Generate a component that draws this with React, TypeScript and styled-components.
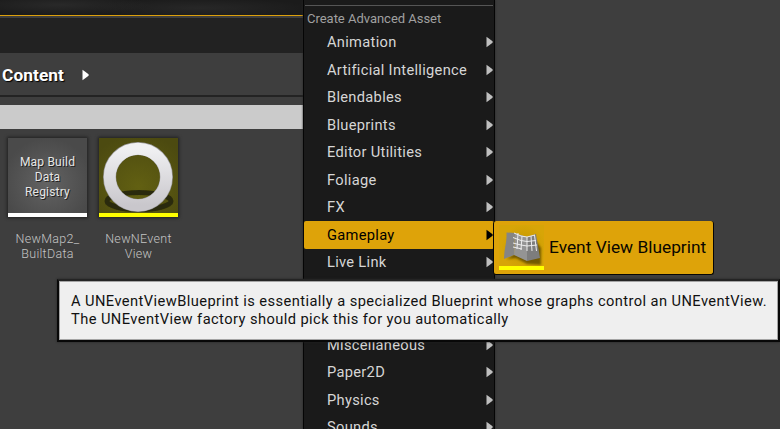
import React from 'react';
import styled, { createGlobalStyle } from 'styled-components';

const GlobalStyle = createGlobalStyle`
  body { margin: 0; background: #3e3e3e; overflow: hidden; }
  * { box-sizing: border-box; }
`;

const Window = styled.div`
  position: relative;
  display: flex;
  width: 780px;
  height: 429px;
  overflow: hidden;
  background: #3e3e3e;
  font-family: Roboto, 'Liberation Sans', sans-serif;
  white-space: nowrap;
`;

const Browser = styled.section`
  display: flex;
  flex-direction: column;
  flex: 0 0 303px;
`;

const Viewport = styled.div`
  height: 15px;
  background:
    radial-gradient(ellipse 90px 10px at 60px 5px, #292929, transparent),
    radial-gradient(ellipse 110px 10px at 200px 8px, #272727, transparent),
    #1b1b1b;
`;

const TabStrip = styled.div`
  height: 38px;
  background: #222;
  border-top: 1px solid #dca00c;
  box-shadow: inset 0 2px #3e3e3e;
`;

const Breadcrumb = styled.nav`
  display: flex;
  align-items: center;
  gap: 18px;
  height: 44px;
  padding: 1px 0 0 2px;
  color: #fff;
  border-bottom: 2px solid #232323;
  font-size: 17.33px;
  font-weight: 700;
  letter-spacing: 0.05px;
  text-shadow: 1px 1px 1px #000;
`;

const SearchStrip = styled.div`
  height: 24px;
  margin-top: 8px;
  background: #cbcbcb;
`;

const AssetGrid = styled.div`
  display: flex;
  gap: 12px;
  padding: 9px 0 0 8px;
`;

const AssetTile = styled.figure`
  width: 79px;
  margin: 0;
`;

const Thumbnail = styled.div<{ $accent: string }>`
  display: flex;
  align-items: center;
  justify-content: center;
  width: 79px;
  height: 79px;
  border-bottom: 4px solid ${(p) => p.$accent};
  background: radial-gradient(circle at 50% 60%, #636363, #4a4a4a 75%);
  box-shadow: 0 0 3px 1px #202020;
  color: #e6e6e6;
  font-size: 12px;
  line-height: 15px;
  letter-spacing: 0.2px;
  text-align: center;
  text-shadow: 1px 1px 0 #222;

  svg { display: block; }
`;

const ThumbnailText = styled.span`
  margin-top: 3px;
`;

const AssetName = styled.figcaption`
  margin-top: 14px;
  color: #c4c4c4;
  font-size: 12.5px;
  font-weight: 300;
  line-height: 15px;
  letter-spacing: 0.3px;
  text-align: center;
`;

const Menu = styled.div`
  display: flex;
  flex-direction: column;
  flex: 0 0 192px;
  border: solid #050505;
  border-width: 0 1px;
  background: #1a1a1a;
  box-shadow: 0 0 2px #222;
`;

const MenuHeading = styled.div`
  flex: 0 0 23.5px;
  margin: 5px 1px 0;
  border-top: 1px solid #555;
  padding: 5px 0 0 2px;
  color: #a0a0a0;
  font-size: 13px;
  line-height: 16px;
  letter-spacing: -0.02px;
`;

const MenuItem = styled.div<{ $active?: boolean }>`
  display: flex;
  flex: 0 0 27.5px;
  align-items: center;
  justify-content: space-between;
  padding: 0 1px 0 23px;
  border-radius: 2px;
  background: ${(p) => (p.$active ? '#dea309' : 'transparent')};
  color: ${(p) => (p.$active ? '#000' : '#d6d6d6')};
  font-size: 14.67px;
  line-height: 18px;
  letter-spacing: 0.3px;

  svg { color: ${(p) => (p.$active ? '#000' : '#bfbfbf')}; }
`;

const Submenu = styled.div`
  position: absolute;
  left: 493px;
  top: 221px;
  display: flex;
  align-items: center;
  gap: 5px;
  width: 221px;
  height: 54px;
  padding: 0 0 1px 5px;
  border: solid #060606;
  border-width: 0 1px 1px;
  border-radius: 3px;
  background: #dea309;
  color: #0a0700;
  font-size: 17.33px;
`;

const Tooltip = styled.div`
  position: absolute;
  left: 57px;
  top: 279px;
  width: 723px;
  height: 63px;
  padding: 11px 0 0 12px;
  border: 2px solid #080808;
  border-top-color: #242424;
  background: #efefef;
  box-shadow: inset 0 0 0 1px #a4a4a4, 0 0 2px #222;
  color: #111;
  font-size: 14.67px;
  line-height: 18px;
  letter-spacing: 0.425px;
`;

const Arrow = () => (
  <svg width="7" height="12" viewBox="0 0 7 12">
    <path d="M.5 .8v10.4L6.6 6.8V5.2z" fill="currentColor" />
  </svg>
);

const RingThumbnail = () => (
  <svg width="79" height="75" viewBox="0 0 79 75">
    <defs>
      <radialGradient id="olive" cx=".5" cy=".65" r=".7">
        <stop stopColor="#626012" />
        <stop offset="1" stopColor="#4c4a10" />
      </radialGradient>
      <linearGradient id="ring" x2="0" y2="1">
        <stop stopColor="#f0f0f2" />
        <stop offset="1" stopColor="#c9c7cc" />
      </linearGradient>
      <filter id="soft"><feGaussianBlur stdDeviation=".7" /></filter>
    </defs>
    <path fill="url(#olive)" d="M0 0h79v75H0z" />
    <ellipse cx="40" cy="63" rx="32" ry="8.5" fill="none" stroke="#2c2c09" strokeWidth="5" filter="url(#soft)" />
    <circle cx="39" cy="39" r="28.4" fill="none" stroke="#99989b" strokeWidth="13" />
    <circle cx="39" cy="39" r="28.3" fill="none" stroke="url(#ring)" strokeWidth="11.9" />
  </svg>
);

const MapIcon = () => (
  <svg width="45" height="45" viewBox="0 0 45 45">
    <defs>
      <radialGradient id="gold" cx=".55" cy=".5">
        <stop stopColor="#c09600" />
        <stop offset="1" stopColor="#d7a507" />
      </radialGradient>
      <filter id="shade"><feGaussianBlur stdDeviation="1.3" /></filter>
    </defs>
    <path d="M0 0h45v45H0z" fill="url(#gold)" />
    <path d="M8 34l9-1 11 6 14 1V23l-6-8z" fill="#5b4700" opacity=".8" filter="url(#shade)" />
    <path d="M7.5 7.5L16 8l-1 22-10 4C5 24 8 18 7.5 7.5z" fill="#858585" />
    <path d="M16 8l12 4v24l-13-6z" fill="#949494" />
    <path d="M28 12l9-3 4 24-13 3z" fill="#7d7d7d" />
    <g fill="none" stroke="#ededed" strokeWidth="1">
      <path d="M15 8l7 3 6 1 8-2M14 12.500l8 3 6 1 9-1M14 18l8 2 6 1 10-1M14 22l9 2M19 8l-1 16M23 11l-1 14M28 12v14M32 11l1 15M35.500 10l2 16" />
    </g>
    <path d="M0 41h45v4H0z" fill="#ffff00" />
  </svg>
);

const ITEMS = [
  'Animation', 'Artificial Intelligence', 'Blendables', 'Blueprints',
  'Editor Utilities', 'Foliage', 'FX', 'Gameplay', 'Live Link',
  '', '', 'Miscellaneous', 'Paper2D', 'Physics', 'Sounds',
];

export default function App() {
  return (
    <Window>
      <GlobalStyle />
      <Browser>
        <Viewport />
        <TabStrip />
        <Breadcrumb>Content <Arrow /></Breadcrumb>
        <SearchStrip />
        <AssetGrid>
          <AssetTile>
            <Thumbnail $accent="#fff">
              <ThumbnailText>Map Build<br />Data<br />Registry</ThumbnailText>
            </Thumbnail>
            <AssetName>NewMap2_<br />BuiltData</AssetName>
          </AssetTile>
          <AssetTile>
            <Thumbnail $accent="#ffff00"><RingThumbnail /></Thumbnail>
            <AssetName>NewNEvent<br />View</AssetName>
          </AssetTile>
        </AssetGrid>
      </Browser>
      <Menu>
        <MenuHeading>Create Advanced Asset</MenuHeading>
        {ITEMS.map((name, i) => (
          <MenuItem key={i} $active={name === 'Gameplay'}>
            <span>{name}</span>
            <Arrow />
          </MenuItem>
        ))}
      </Menu>
      <Submenu><MapIcon />Event View Blueprint</Submenu>
      <Tooltip>
        A UNEventViewBlueprint is essentially a specialized Blueprint whose graphs control an UNEventView.<br />
        The UNEventView factory should pick this for you automatically
      </Tooltip>
    </Window>
  );
}
